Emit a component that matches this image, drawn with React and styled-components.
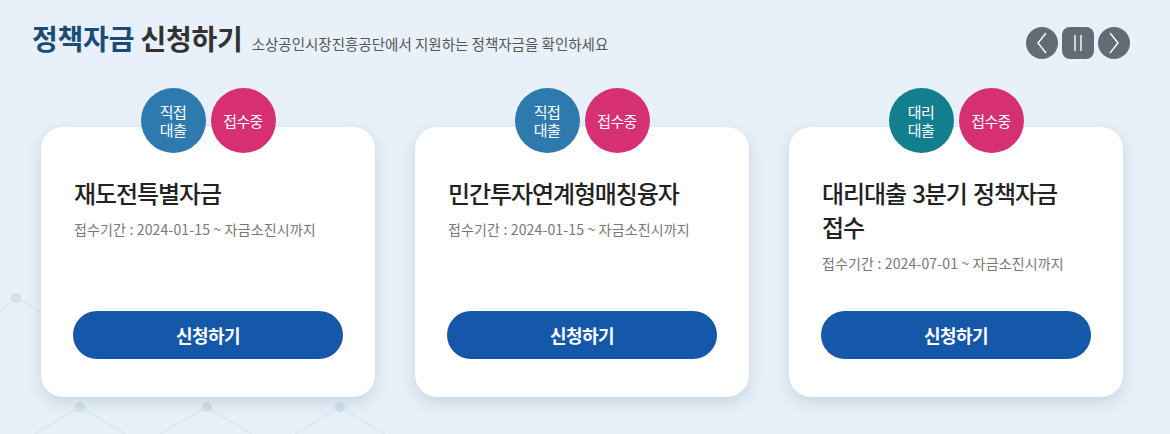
import styled, { createGlobalStyle } from "styled-components";

const GlobalStyle = createGlobalStyle`
    * { box-sizing: border-box; }
    html, body {
        margin: 0;
        padding: 0;
        background-color: #e8f1f9;
        font-family: "Noto Sans CJK KR", "Noto Sans", sans-serif;
    }
    button { font-family: inherit; border: 0; cursor: pointer; }
`;

const Page = styled.section`
    position: relative;
    width: 1170px;
    height: 434px;
    overflow: hidden;
    padding: 19px 40px 0 32px;
    background-color: #e8f1f9;
`;

const Decoration = styled.svg`
    position: absolute;
    left: 0;
    top: 0;
    z-index: 0;
    pointer-events: none;
`;

const Header = styled.div`
    position: relative;
    z-index: 1;
    display: flex;
    justify-content: space-between;
    align-items: flex-start;
`;

const TitleGroup = styled.div`
    display: flex;
    align-items: baseline;
    gap: 9px;
`;

const Title = styled.h2`
    margin: 0;
    font-size: 28px;
    font-weight: 700;
    line-height: 38px;
    letter-spacing: -0.2px;
    color: #333;

    em {
        font-style: normal;
        color: #1a4c78;
    }
`;

const SubTitle = styled.p`
    margin: 0;
    font-size: 14.5px;
    font-weight: 400;
    letter-spacing: 0;
    color: #555;
`;

const Controls = styled.div`
    display: flex;
    gap: 4px;
    margin-top: 8px;
`;

const ControlButton = styled.button`
    width: 32px;
    height: 32px;
    padding: 0;
    display: flex;
    align-items: center;
    justify-content: center;
    background-color: #636c76;
    border-radius: ${({ $square }) => ($square ? "8px" : "50%")};
`;

const CardRow = styled.div`
    position: relative;
    z-index: 1;
    display: grid;
    grid-template-columns: repeat(3, 334px);
    gap: 40px;
    margin: 68px 0 0 9px;
`;

const Card = styled.article`
    position: relative;
    height: 270px;
    display: flex;
    flex-direction: column;
    padding: 49px 32px 38px 33px;
    background-color: #fff;
    border-radius: 22px;
    box-shadow: 0 6px 16px rgba(40, 70, 100, 0.16);
`;

const Badges = styled.div`
    position: absolute;
    top: -39px;
    left: 0;
    right: 0;
    display: flex;
    justify-content: center;
    gap: 5px;
`;

const Badge = styled.span`
    width: 65px;
    height: 65px;
    border-radius: 50%;
    display: flex;
    align-items: center;
    justify-content: center;
    text-align: center;
    padding-top: 1px;
    background-color: ${({ $color }) => $color};
    color: #fff;
    font-size: 15px;
    line-height: 18px;
    letter-spacing: -0.6px;
`;

const CardTitle = styled.h3`
    margin: 0;
    font-size: 24px;
    font-weight: 500;
    line-height: 34px;
    letter-spacing: -1.1px;
    word-spacing: 2px;
    word-break: keep-all;
    color: #222;
`;

const Period = styled.p`
    margin: 9px 0 0;
    font-size: 14px;
    line-height: 20px;
    letter-spacing: 0.15px;
    color: #777;
`;

const ApplyButton = styled.button`
    margin-top: auto;
    width: 270px;
    height: 48px;
    margin-left: -1px;
    border-radius: 24px;
    background-color: #1557a8;
    color: #fff;
    font-size: 18px;
    font-weight: 700;
    letter-spacing: -0.6px;
`;

const funds = [
    {
        type: ["직접", "대출"],
        typeColor: "#2e79ad",
        title: "재도전특별자금",
        period: "접수기간 : 2024-01-15 ~ 자금소진시까지",
    },
    {
        type: ["직접", "대출"],
        typeColor: "#2e79ad",
        title: "민간투자연계형매칭융자",
        period: "접수기간 : 2024-01-15 ~ 자금소진시까지",
    },
    {
        type: ["대리", "대출"],
        typeColor: "#137e8e",
        title: "대리대출 3분기 정책자금 접수",
        period: "접수기간 : 2024-07-01 ~ 자금소진시까지",
    },
];

const Chevron = ({ dir }) => (
    <svg width="12" height="22" viewBox="0 0 12 22">
        <path
            d={dir === "left" ? "M10 1 L2 11 L10 21" : "M2 1 L10 11 L2 21"}
            fill="none"
            stroke="#fff"
            strokeWidth="1.4"
        />
    </svg>
);

const PauseIcon = () => (
    <svg width="10" height="18" viewBox="0 0 10 18">
        <path d="M2 1 V17 M8 1 V17" stroke="#fff" strokeWidth="1.4" />
    </svg>
);

const NetworkPattern = () => (
    <Decoration width="1170" height="434" viewBox="0 0 1170 434">
        <g stroke="#d4e2ec" strokeWidth="1" fill="none">
            <path d="M0 311 L16 298 L60 322" />
            <path d="M35 434 L80 407 L125 434" />
            <path d="M160 434 L207 407 L252 434" />
            <path d="M295 434 L340 407 L385 434" />
        </g>
        <g fill="#d2e1eb">
            <circle cx="16" cy="298" r="5" />
            <circle cx="80" cy="407" r="5" />
            <circle cx="207" cy="407" r="5" />
            <circle cx="340" cy="407" r="5" />
        </g>
    </Decoration>
);

const App = () => {
    return (
        <>
            <GlobalStyle />
            <Page>
                <NetworkPattern />
                <Header>
                    <TitleGroup>
                        <Title><em>{'정책자금'}</em> {'신청하기'}</Title>
                        <SubTitle>{'소상공인시장진흥공단에서 지원하는 정책자금을 확인하세요'}</SubTitle>
                    </TitleGroup>
                    <Controls>
                        <ControlButton aria-label="이전"><Chevron dir="left" /></ControlButton>
                        <ControlButton $square aria-label="정지"><PauseIcon /></ControlButton>
                        <ControlButton aria-label="다음"><Chevron dir="right" /></ControlButton>
                    </Controls>
                </Header>

                <CardRow>
                    {funds.map((fund) => (
                        <Card key={fund.title}>
                            <Badges>
                                <Badge $color={fund.typeColor}>
                                    {fund.type[0]}<br />{fund.type[1]}
                                </Badge>
                                <Badge $color="#d62f72">{'접수중'}</Badge>
                            </Badges>
                            <CardTitle>{fund.title}</CardTitle>
                            <Period>{fund.period}</Period>
                            <ApplyButton>{'신청하기'}</ApplyButton>
                        </Card>
                    ))}
                </CardRow>
            </Page>
        </>
    );
};

export default App;
